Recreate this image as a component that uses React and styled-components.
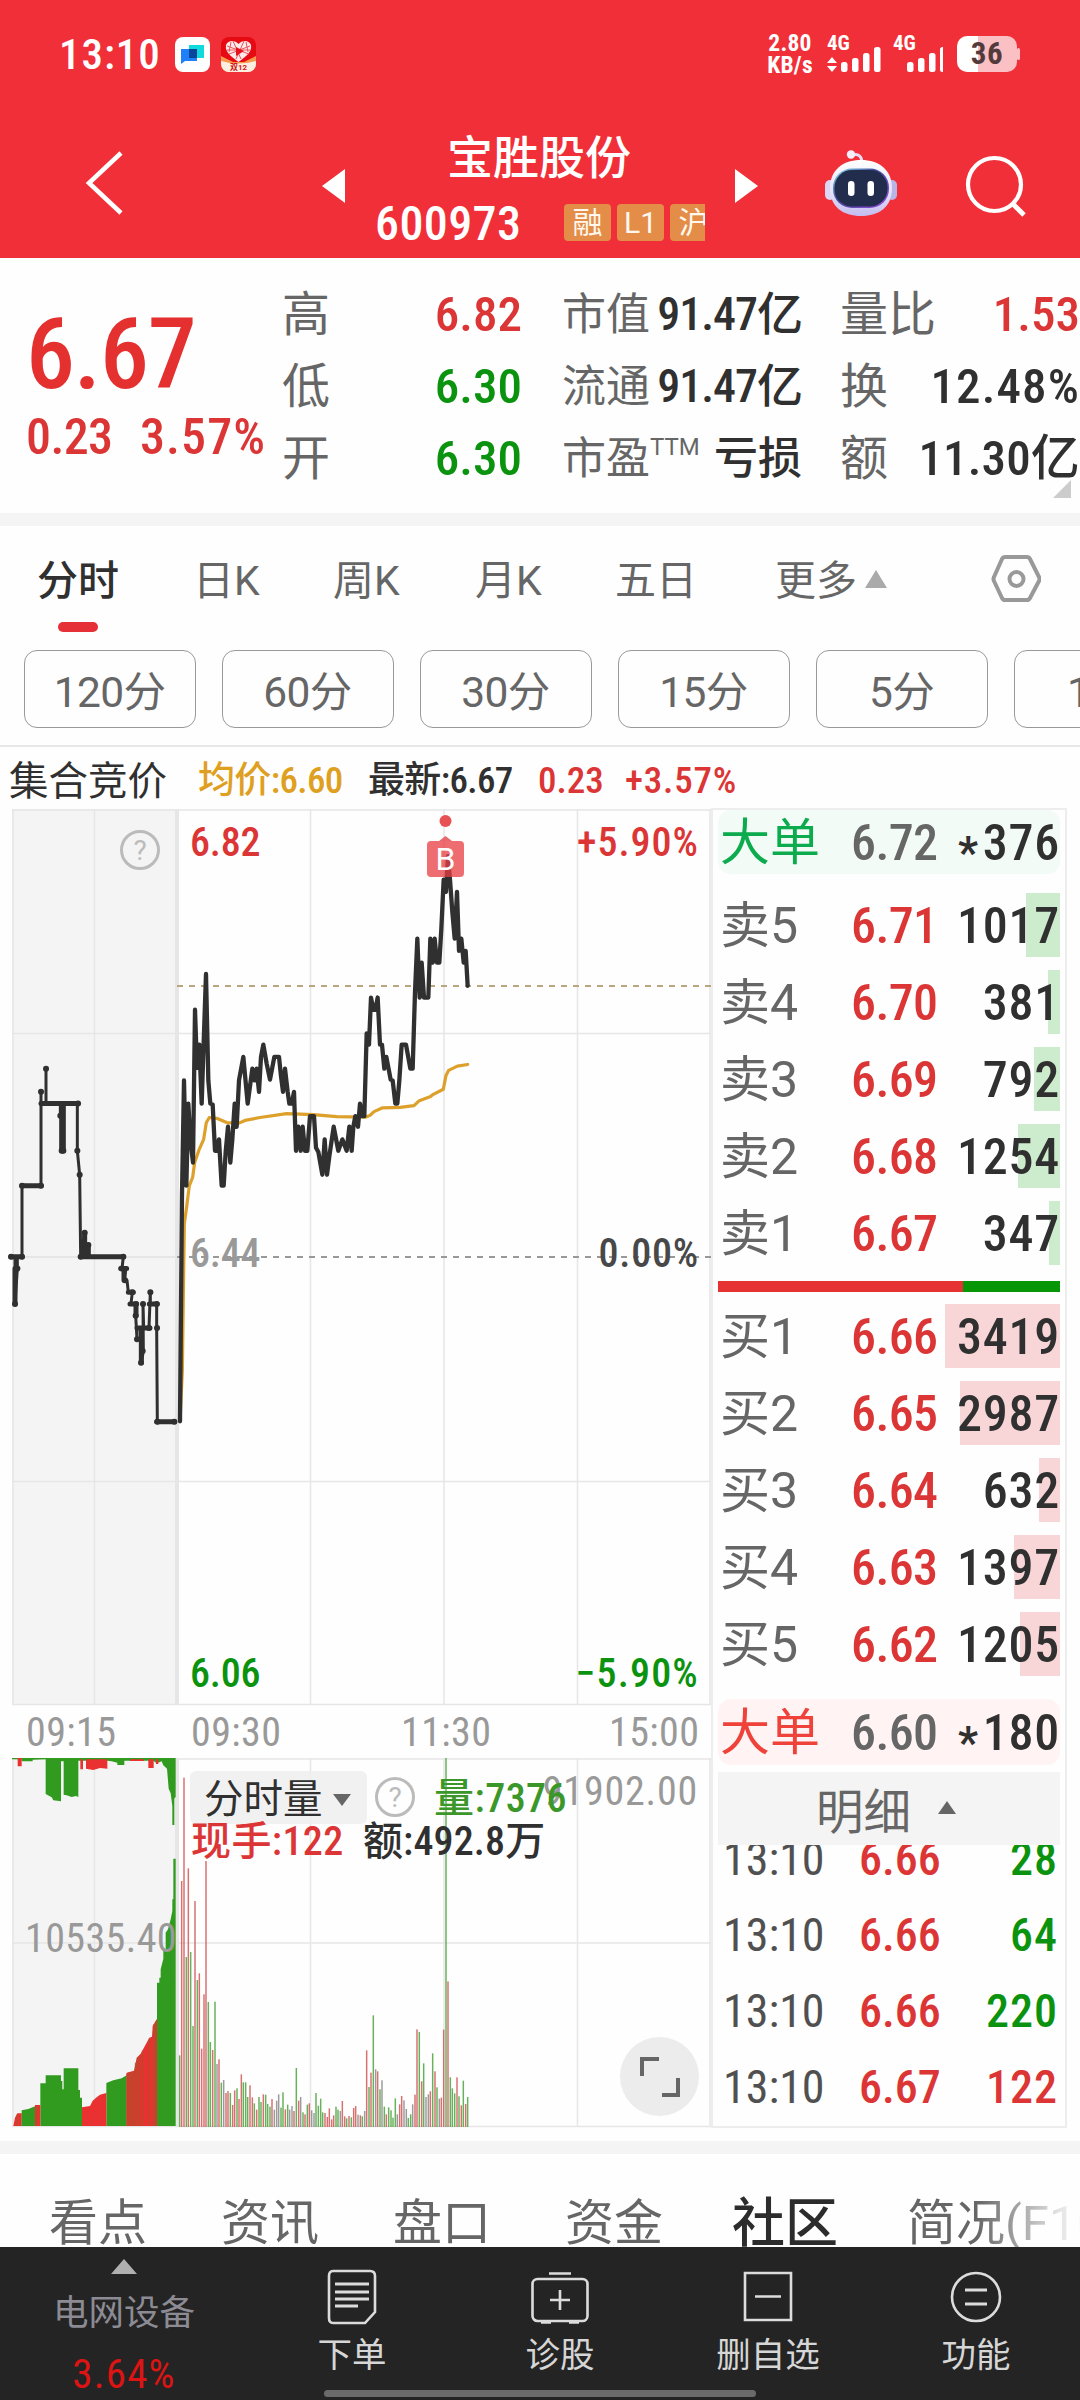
import React from "react";
import styled, { createGlobalStyle } from "styled-components";

const C = {
  brand: "#f12f38",
  up: "#dc3535",
  down: "#0b930f",
  ink: "#303030",
  mute: "#666",
  pale: "#999",
  avg: "#dfa022",
  line: "#e6e6e6",
  band: "#f4f4f4",
};

const Global = createGlobalStyle`
  * { box-sizing: border-box; }
  body { margin: 0; background: #fefefe; }
  #root { width: 1080px; }
`;

const Screen = styled.div`
  width: 1080px;
  height: 2400px;
  overflow: hidden;
  display: flex;
  flex-direction: column;
  background: #fefefe;
  color: ${C.ink};
  font-family: Roboto, "Noto Sans CJK SC", sans-serif;
`;

const Txt = styled.span`
  display: block;
  white-space: nowrap;
  font-size: ${(p) => p.$s}px;
  line-height: 1.2;
  color: ${(p) => p.$c || "inherit"};
  font-weight: ${(p) => p.$w || 400};
  letter-spacing: ${(p) => p.$ls || 0}em;
`;

const Num = styled(Txt)`
  font-family: "Roboto Condensed", Roboto, "Noto Sans CJK SC", sans-serif;
  font-weight: ${(p) => p.$w || 500};
  letter-spacing: ${(p) => (p.$ls === undefined ? 0.022 : p.$ls)}em;
`;

/* ---------- header ---------- */
const Header = styled.header`
  height: 258px;
  flex: none;
  background: ${C.brand};
  color: #fff;
`;
const StatusBar = styled.div`
  height: 108px;
  padding: 0 60px 0 59px;
  display: flex;
  align-items: center;
`;
const Clock = styled(Num)`
  width: 116px;
  padding-top: 2px;
`;
const AppIcons = styled.div`
  display: flex;
  gap: 11px;
  flex: 1;
`;
const Speed = styled.div`
  width: 52px;
  text-align: center;
  margin-right: 11px;
  font-family: "Roboto Condensed", Roboto, sans-serif;
  font-size: 23.5px;
  line-height: 22px;
  font-weight: 700;
  letter-spacing: 0.01em;
`;
const Gap = styled.span`
  width: ${(p) => p.$w}px;
`;
const Battery = styled.div`
  width: 60px;
  height: 36px;
  border-radius: 10px;
  display: flex;
  align-items: center;
  justify-content: center;
  background: linear-gradient(90deg, #fff 35%, #fbc0c4 35%);
`;
const NavRow = styled.div`
  height: 150px;
  display: grid;
  grid-template-columns: 322px 25px 388px 25px 65px 72px 68px 62px;
  align-items: start;
`;
const NavIcon = styled.svg`
  display: block;
  margin-top: ${(p) => p.$t}px;
  margin-left: ${(p) => p.$l || 0}px;
  overflow: visible;
`;
const Title = styled.div`
  display: flex;
  flex-direction: column;
  padding-top: 22px;
`;
const Name = styled(Txt)`
  margin-left: 100px;
  line-height: 57px;
`;
const CodeLine = styled.div`
  display: flex;
  align-items: center;
  height: 71px;
  padding-left: 28px;
`;
const Code = styled(Num)`
  width: 189px;
  padding-top: 3px;
`;
const Tags = styled.div`
  display: flex;
  gap: 6px;
  width: 141px;
  overflow: hidden;
`;
const Tag = styled.span`
  flex: none;
  width: 47px;
  height: 37px;
  border-radius: 4px;
  background: #e38d49;
  color: #fff8ee;
  font-size: 30px;
  line-height: 38px;
  text-align: center;
`;

/* ---------- quote summary ---------- */
const Quote = styled.section`
  height: 255px;
  flex: none;
  display: grid;
  grid-template-columns: 282px 240px 240px 240px;
  position: relative;
`;
const PriceBlock = styled.div`
  padding: 38px 0 0 26px;
  display: flex;
  flex-direction: column;
`;
const Change = styled.div`
  display: grid;
  grid-template-columns: 114px auto;
  margin-top: -7px;
`;
const StatCol = styled.div`
  padding-top: 21px;
  margin-left: ${(p) => p.$m || 0}px;
  width: 240px;
`;
const StatRow = styled.div`
  height: 72px;
  display: flex;
  align-items: center;
  justify-content: space-between;
`;
const LabelWrap = styled.div`
  display: flex;
`;
const Corner = styled.div`
  position: absolute;
  right: 9px;
  bottom: 15px;
  border-left: 18px solid transparent;
  border-bottom: 18px solid #ccc;
`;
const Band = styled.div`
  height: 13px;
  flex: none;
  background: ${C.band};
`;
const Spacer = styled.div`
  height: 13px;
  flex: none;
`;

/* ---------- period tabs ---------- */
const PeriodTabs = styled.div`
  height: 124px;
  flex: none;
  padding: 31px 0 0 37px;
  display: grid;
  grid-template-columns: 156px 140px 142px 140px 160px 216px auto;
`;
const Tab = styled.div`
  display: flex;
  flex-direction: column;
  align-items: flex-start;
`;
const Pill = styled.i`
  width: 40px;
  height: 10px;
  border-radius: 5px;
  background: #e63037;
  margin: 16px 0 0 21px;
`;
const More = styled.div`
  display: flex;
  align-items: flex-start;
  gap: 8px;
`;
const HexIcon = styled.svg`
  margin-top: -4px;
`;
const Caret = styled.i`
  width: 0;
  height: 0;
  border-left: ${(p) => p.$w / 2}px solid transparent;
  border-right: ${(p) => p.$w / 2}px solid transparent;
  ${(p) => (p.$down ? "border-top" : "border-bottom")}: ${(p) => p.$h}px solid ${(p) => p.$c};
  margin-top: ${(p) => p.$t || 0}px;
`;
const Minutes = styled.div`
  height: 97px;
  flex: none;
  padding-left: 24px;
  display: flex;
  gap: 26px;
  overflow: hidden;
  border-bottom: 2px solid #e8e8e8;
`;
const MinuteBtn = styled.div`
  flex: none;
  width: 172px;
  height: 78px;
  border: 1.5px solid #999;
  border-radius: 13px;
  display: flex;
  align-items: center;
  justify-content: center;
  padding: 7px 1px 0 0;
  color: ${C.mute};
`;

/* ---------- chart area ---------- */
const Info = styled.div`
  height: 61px;
  flex: none;
  display: grid;
  grid-template-columns: 189px 170px 170px 87px auto;
  align-items: center;
  padding: 8px 0 0 9px;
`;
const Market = styled.section`
  height: 1320px;
  flex: none;
  display: flex;
  padding-left: 12px;
`;
const Charts = styled.div`
  width: 699px;
  padding-top: 1px;
`;
const Plot = styled.div`
  position: relative;
  height: ${(p) => p.$h}px;
`;
const Canvas = styled.svg`
  position: absolute;
  left: 0;
  top: 0;
  display: block;
  overflow: visible;
`;
const Mark = styled(Num)`
  position: absolute;
  line-height: 40px;
  margin-top: -20px;
  top: ${(p) => p.$y}px;
  ${(p) => (p.$r !== undefined ? `right: ${p.$r}px` : `left: ${p.$x}px`)};
`;
const Flag = styled.div`
  position: absolute;
  left: 415px;
  top: 32px;
  width: 37px;
  height: 36px;
  border-radius: 4px;
  background: rgba(232, 60, 64, 0.75);
  color: #fff;
  font: 400 32px/37px Roboto, sans-serif;
  text-align: center;
`;
const Times = styled.div`
  height: 53px;
  display: grid;
  grid-template-columns: 165px 210px 208px 100px;
  align-items: center;
  padding: 2px 0 0 14px;
  color: ${C.pale};
`;
const Picker = styled.div`
  position: absolute;
  left: 178px;
  top: 13px;
  width: 177px;
  height: 53px;
  border-radius: 6px;
  background: rgba(238, 238, 238, 0.85);
  display: flex;
  align-items: center;
  padding: 4px 0 0 14px;
  gap: 10px;
`;
const Help = styled.div`
  position: absolute;
  left: ${(p) => p.$x}px;
  top: ${(p) => p.$y}px;
  width: 40px;
  height: 40px;
  border: 3px solid #bbb;
  border-radius: 50%;
  color: #bbb;
  font: 400 28px/35px Roboto, sans-serif;
  text-align: center;
`;
const Expand = styled.div`
  position: absolute;
  left: 608px;
  top: 279px;
  width: 79px;
  height: 79px;
  border-radius: 50%;
  background: #ececec;
  display: grid;
  place-items: center;
`;

/* ---------- order book ---------- */
const Book = styled.aside`
  width: 356px;
  height: 1320px;
  border: 2px solid #ededed;
  padding: 0 5px;
  display: flex;
  flex-direction: column;
  overflow: hidden;
`;
const BigOrder = styled.div`
  height: ${(p) => p.$h}px;
  margin-top: ${(p) => p.$t || 0}px;
  flex: none;
  border-radius: 13px;
  background: ${(p) => p.$bg};
  display: grid;
  grid-template-columns: 131px 89px 1fr;
  align-items: center;
  padding: 1px 0 0 2px;
`;
const Level = styled.div`
  height: 64px;
  margin-bottom: 13px;
  flex: none;
  display: grid;
  grid-template-columns: 131px 89px 1fr;
  align-items: center;
  padding: 2px 0 0 2px;
  background: linear-gradient(${(p) => p.$bg}, ${(p) => p.$bg}) right / ${(p) => p.$bar}px 100% no-repeat;
`;
const Right = styled(Num)`
  text-align: right;
`;
const Star = styled.span`
  display: inline-block;
  font-family: Roboto, sans-serif;
  font-size: 44px;
  font-weight: 700;
  line-height: 1;
  transform: translateY(8px);
  margin-right: 4px;
`;
const Levels = styled.div`
  padding-top: ${(p) => p.$t}px;
`;
const Balance = styled.div`
  height: 11px;
  flex: none;
  margin-top: 3px;
  background: linear-gradient(90deg, #e53333 0 245.5px, #069606 245.5px);
`;
const DetailBar = styled.div`
  height: 73px;
  flex: none;
  margin-top: 7px;
  background: ${C.band};
  display: flex;
  padding: 13px 0 0 98px;
  gap: 27px;
  color: ${C.mute};
`;
const Trades = styled.div`
  overflow: hidden;
  flex: 1;
`;
const TradeList = styled.div`
  margin-top: -23px;
`;
const Trade = styled.div`
  height: 76px;
  display: grid;
  grid-template-columns: 136px 80px 1fr;
  align-items: center;
  padding: 0 2px 0 5px;
`;

/* ---------- bottom ---------- */
const Sections = styled.nav`
  height: 93px;
  flex: none;
  display: flex;
  padding: 48px 0 0 49px;
  gap: 74px;
  align-items: center;
  overflow: hidden;
  color: ${C.mute};
`;
const Current = styled(Txt)`
  margin: 0 -5px 0 -5px;
`;
const Faded = styled(Txt)`
  background: linear-gradient(90deg, #666 70px, #e0e0e0 150px, #fefefe 178px);
  -webkit-background-clip: text;
  background-clip: text;
  color: transparent;
`;
const Dock = styled.footer`
  height: 153px;
  flex: none;
  background: #242424;
  color: #d6d6d6;
`;
const DockRow = styled.div`
  height: 143px;
  display: grid;
  grid-template-columns: 248px repeat(4, 208px);
`;
const DockItem = styled.div`
  display: flex;
  flex-direction: column;
  align-items: center;
  padding-top: ${(p) => p.$t || 21}px;
`;
const DockLabel = styled(Txt)`
  margin-top: ${(p) => p.$m}px;
`;
const DockRate = styled(Num)`
  margin-top: 15px;
`;
const HomeBar = styled.div`
  width: 432px;
  height: 7px;
  border-radius: 4px;
  background: #6a6a6a;
  margin: 0 auto;
`;

/* ---------- data ---------- */
const AUCTION =
  "M33 1109H52V1137L45 1221V1109H66V940H123V717V745H138V662V745H181V774V745H187V857V745H232V857L239 914L242 1109L254 1052V1109L265 1081V1109H370L366 1137H378L372 1165H381L385 1193H397L393 1221H408L407 1249L411 1305V1278H424V1361L430 1333L429 1221L431 1278H447L451 1193V1221H470V1278L472 1501H525";
const AUCTION_BOLD =
  "M33 1109H66M66 940H123M123 745H234M242 1109H265M254 1052V1109M265 1081V1109M265 1109H370M362 1137H380M385 1193H400M390 1221H410M411 1278H450M448 1221H472M470 1501H524M45 1221V1137M185 745V857M190 745V857M424 1361V1278M372 1137V1165M408 1221V1249";
const AUCTION_DOTS = [
  [33, 1109], [52, 1137], [45, 1221], [66, 1109], [66, 940], [123, 940], [123, 717], [138, 662], [181, 774], [185, 857], [190, 857],
  [234, 745], [232, 857], [239, 914], [242, 1109], [254, 1052], [265, 1081], [370, 1109], [366, 1137], [375, 1165], [397, 1193], [408, 1221],
  [407, 1249], [411, 1305], [423, 1361], [428, 1333], [429, 1221], [447, 1278], [451, 1193], [470, 1221], [471, 1278], [472, 1501], [523, 1501],
];
const PRICE =
  "540,1500 546,960 552,690 559,940 565,745 571,830 579,885 585,522 591,660 598,605 605,745 611,600 618,437 625,690 631,745 638,747 645,857 651,857 657,830 665,940 671,940 677,860 684,800 691,885 697,830 704,745 710,800 717,690 730,634 743,745 757,662 763,690 770,662 777,717 783,634 790,605 800,650 810,688 823,634 837,634 843,680 849,717 855,662 863,717 868,745 875,745 882,717 888,857 895,800 902,857 908,800 915,857 922,857 930,775 942,775 948,850 955,860 967,914 974,830 981,914 988,870 1001,800 1015,857 1027,830 1040,857 1048,800 1055,857 1060,800 1066,775 1074,800 1080,745 1088,775 1093,775 1100,578 1107,605 1113,493 1120,522 1126,522 1133,493 1140,605 1146,605 1153,662 1159,634 1172,688 1178,690 1186,745 1192,745 1198,690 1205,605 1218,605 1231,662 1238,662 1245,480 1252,353 1259,493 1265,410 1272,493 1285,493 1291,353 1298,410 1304,353 1311,410 1318,410 1324,330 1331,213 1338,242 1344,157 1350,213 1357,290 1364,353 1371,242 1377,382 1384,353 1391,410 1397,382 1403,465";
const AVERAGE =
  "540,1500 547,1380 550,1200 553,1030 560,990 568,940 578,920 584,885 598,853 611,830 619,790 628,778 650,780 680,790 715,792 735,785 780,778 860,769 940,771 1010,776 1098,777 1110,773 1122,764 1148,755 1200,754 1242,750 1258,738 1290,729 1300,723 1330,711 1338,678 1346,666 1372,656 1403,652";

const VOLUME =
  "g539,1248 r545,725 r552,415 g559,953 r565,687 g572,938 g579,1160 r585,785 g592,1022 r598,1002 r605,1228 r612,1065 r618,665 g625,1088 g631,1208 r638,1232 g645,1087 k651,1274 r657,1260 g664,1330 k671,1322 r678,1361 r684,1355 g691,1361 r698,1397 r704,1353 g711,1347 r717,1379 r724,1305 g730,1329 g737,1329 g743,1373 r750,1338 r757,1374 g763,1392 r770,1411 g777,1373 g783,1388 r790,1365 g797,1366 g803,1394 g810,1402 r816,1379 k823,1411 k830,1384 k836,1365 g843,1405 g849,1359 r856,1410 g863,1396 k869,1411 k876,1400 r882,1415 g889,1286 r896,1384 k902,1373 g909,1419 r915,1425 g922,1396 r928,1392 k935,1413 k942,1421 g948,1361 g955,1399 g962,1378 g968,1419 r975,1421 r982,1433 r988,1407 r995,1440 r1001,1428 g1008,1402 g1014,1411 k1021,1415 r1027,1385 r1034,1431 g1040,1437 r1047,1430 g1054,1434 r1061,1406 r1067,1400 k1074,1426 r1081,1428 g1087,1431 k1094,1415 r1100,1233 g1107,1343 r1113,1300 g1120,1128 k1127,1290 r1133,1296 g1140,1350 k1146,1323 g1153,1402 r1159,1425 g1166,1404 g1173,1413 g1179,1435 g1186,1377 k1192,1425 r1199,1395 r1205,1370 k1212,1383 k1219,1409 g1225,1436 g1232,1425 k1238,1395 r1245,1366 r1251,1170 g1258,1178 r1265,1326 g1271,1272 k1278,1373 k1285,1365 r1291,1356 g1298,1242 r1305,1296 g1311,1344 k1318,1378 r1324,1375 r1331,1171 g1338,355 r1344,1026 g1351,1314 g1357,1347 g1364,1362 r1371,1314 g1377,1371 r1384,1398 g1390,1324 r1397,1394 g1403,1373"
    .split(" ")
    .map((t) => {
      const [x, y] = t.slice(1).split(",").map(Number);
      return { c: t[0], x, y };
    });
const TONE = { r: "#cf5050", g: "#44a035", k: "#858585" };

const SELLS = [
  ["卖5", "6.71", "1017", 34],
  ["卖4", "6.70", "381", 12],
  ["卖3", "6.69", "792", 26],
  ["卖2", "6.68", "1254", 42],
  ["卖1", "6.67", "347", 11],
];
const BUYS = [
  ["买1", "6.66", "3419", 115],
  ["买2", "6.65", "2987", 100],
  ["买3", "6.64", "632", 21],
  ["买4", "6.63", "1397", 46],
  ["买5", "6.62", "1205", 40],
];
const TRADES = [
  ["6.66", "28", C.down],
  ["6.66", "64", C.down],
  ["6.66", "220", C.down],
  ["6.67", "122", C.up],
];

/* ---------- pieces ---------- */
const Signal = ({ arrows }) => (
  <svg width={arrows ? 56 : 50} height="40" viewBox={arrows ? "0 0 56 40" : "0 0 50 40"} fill="#fff">
    <text x="0" y="16" fontFamily="Roboto Condensed, Roboto" fontWeight="700" fontSize="21">4G</text>
    {arrows && <path d="M0 29l5-6 5 6zM0 32l5 6 5-6z" />}
    {[28, 24, 19, 13].map((y, i) => (
      <rect key={y} x={14 + i * 11} y={y} width="6.500" height={38 - y} rx="2.500" />
    ))}
  </svg>
);

const Robot = () => (
  <NavIcon width="72" height="67" viewBox="0 0 72 67" $t="42">
    <defs>
      <linearGradient id="shell" x1="0" y1="0" x2="0" y2="1">
        <stop offset="0" stopColor="#fff" />
        <stop offset=".6" stopColor="#e4e0f8" />
        <stop offset="1" stopColor="#c3bcf0" />
      </linearGradient>
      <linearGradient id="rim" x1="0" y1="0" x2="1" y2="1">
        <stop offset="0" stopColor="#8fe6f0" />
        <stop offset=".4" stopColor="#3e4a9a" />
        <stop offset="1" stopColor="#9c4be0" />
      </linearGradient>
    </defs>
    <path d="M27 5c7-2 10 2 10 8" fill="none" stroke="#e6dcf4" strokeWidth="3" />
    <circle cx="26" cy="4.500" r="4.200" fill="#f6eefa" />
    <rect x="0" y="30" width="10" height="20" rx="5" fill="#dcd8f4" />
    <rect x="62" y="30" width="10" height="20" rx="5" fill="#b9b4e6" />
    <path d="M36 10C54 10 67 20 67 38C67 57 54 66 36 66S5 57 5 38C5 20 18 10 36 10z" fill="url(#shell)" />
    <rect x="8" y="18.500" width="56" height="39.500" rx="19" fill="url(#rim)" />
    <rect x="9.500" y="20" width="53" height="36.500" rx="17.500" fill="#222c4c" />
    <rect x="23" y="31" width="6.500" height="15" rx="3.200" fill="#fff" />
    <rect x="42.500" y="31" width="6.500" height="15" rx="3.200" fill="#fff" />
  </NavIcon>
);

const Grid = ({ rows, w = 699, h }) => (
  <g stroke={C.line} strokeWidth="1.500" fill="none">
    {rows.map((y) => (
      <path key={y} d={`M0 ${y}H${w}`} />
    ))}
    {[1, 82.5, 298.5, 432, 565.5, 698].map((x) => (
      <path key={x} d={`M${x} 0V${h}`} />
    ))}
    <path d={`M165 0V${h}`} strokeWidth="4" />
  </g>
);

const PriceChart = () => (
  <Plot $h="896">
    <Canvas width="699" height="896">
      <rect width="165" height="896" fill={C.band} />
      <Grid rows={[1, 224.5, 672.5, 895.5]} h={896} />
      <path d="M0 448H165" stroke={C.line} strokeWidth="2" />
      <path d="M165 177H699" stroke="#b9a67f" strokeWidth="2" strokeDasharray="6 6" />
      <path d="M165 448H699" stroke="#999" strokeWidth="2" strokeDasharray="6 6" />
      <svg width="699" height="896" viewBox="36 45 2097 2129" preserveAspectRatio="none" overflow="visible">
        <g fill="none" stroke="#303030" strokeLinejoin="round" strokeLinecap="round">
          <path d={AUCTION} strokeWidth="3" vectorEffect="non-scaling-stroke" />
          <path d={AUCTION_BOLD} strokeWidth="5" vectorEffect="non-scaling-stroke" />
          {AUCTION_DOTS.map(([x, y], i) => (
            <path key={i} d={`M${x} ${y}h.1`} strokeWidth="6" vectorEffect="non-scaling-stroke" />
          ))}
          <polyline points={AVERAGE} stroke="#dca02b" strokeWidth="3.200" vectorEffect="non-scaling-stroke" />
          <polyline points={PRICE} strokeWidth="4.300" vectorEffect="non-scaling-stroke" />
        </g>
      </svg>
      <circle cx="433.500" cy="12" r="6" fill="#e85154" />
      <path d="M427 32l6.500-5 6.500 5z" fill="#e9686b" />
    </Canvas>
    <Help $x={108} $y={21}>?</Help>
    <Flag>B</Flag>
    <Mark $s={40} $c={C.up} $x={178} $y={34} $ls={-0.005}>6.82</Mark>
    <Mark $s={40} $c={C.up} $r={12} $y={34} $ls={0.025}>+5.90%</Mark>
    <Mark $s={40} $c={C.pale} $x={178} $y={445} $ls={-0.005}>6.44</Mark>
    <Mark $s={40} $c="#484848" $r={12} $y={445} $ls={0.02}>0.00%</Mark>
    <Mark $s={40} $c={C.down} $x={178} $y={865} $ls={-0.005}>6.06</Mark>
    <Mark $s={40} $c={C.down} $r={12} $y={865} $ls={0.03}>−5.90%</Mark>
  </Plot>
);

const VolumeChart = () => (
  <Plot $h="370">
    <Canvas width="699" height="370">
      <rect width="165" height="369" fill={C.band} />
      <Grid rows={[1, 185, 368.5]} h={369} />
      <svg width="699" height="369" viewBox="36 356 2097 1107" preserveAspectRatio="none">
        <g fill="#319b1f">
          <path d="M65 1460V1413L85 1409L105 1401V1460zM121 1460V1332H137V1308H183V1325H187V1350H191V1287H235V1352H240V1375H246V1460zM319 1460V1331L340 1323L365 1317L380 1308V1460z" />
          <path d="M471 1460V1030H478V1015H482V990L490 958V930H497V880L504 870L512 840L517 815V780H520V658H527V1460z" />
          <path d="M36 356H137V360L98 361V366H65V360H36zM137 356H235V473L228 470L215 473L200 468L191 466V366H183V486L160 483L155 474L137 464zM235 356H527V472L523 478V557H517V500L512 462L506 448L501 388L490 378L485 366L470 372L460 364H373V377H352V370L335 366L322 364H235z" />
        </g>
        <g fill="#e93131">
          <path d="M40 1460L45 1435L52 1422H65V1460zM105 1460V1397H121V1460zM246 1460V1404L270 1400L278 1384L290 1374L300 1366L319 1361V1460z" />
          <path d="M380 1460V1300L402 1294L410 1255L422 1243L430 1228L448 1195L456 1192L458 1160L465 1148L471 1138V1460z" />
          <path d="M53 356H65V381H53zM241 360H249V390H241zM258 360H322V388L300 386L280 392L258 388zM390 360H432V365H390zM445 360H461V386H445zM468 360H475V374H468z" />
        </g>
        <g stroke="#9a5a28" strokeWidth="2.500">
          <path d="M52 1425V1460M62 1425V1460M110 1400V1460M380 1303V1460M386 1300V1460M392 1299V1460M398 1297V1460M406 1270V1460M413 1254V1460M419 1247V1460M427 1234V1460M448 1197V1460M462 1155V1460M467 1147V1460" />
        </g>
        {VOLUME.map((v) => (
          <rect key={v.x} x={v.x - 2.2} y={v.y} width="4.400" height={1463 - v.y} fill={TONE[v.c]} opacity=".82" />
        ))}
      </svg>
    </Canvas>
    <Mark $s={40} $w={400} $c={C.pale} $x={13} $y={181} $ls={0.01}>10535.40</Mark>
    <Picker>
      <Txt $s={39.500}>分时量</Txt>
      <Caret $w={18} $h={12} $c="#666" $down />
    </Picker>
    <Help $x={363} $y={19}>?</Help>
    <Mark $s={40} $w={400} $c={C.pale} $r={13} $y={34} $ls={0.02}>91902.00</Mark>
    <Mark $s={40} $c="#3b972a" $x={422} $y={41} $ls={0.012}>量:7376</Mark>
    <Mark $s={40} $c={C.up} $x={179} $y={84} $ls={0.01}>现手:122</Mark>
    <Mark $s={40} $x={351} $y={84} $ls={0.003}>额:492.8万</Mark>
    <Expand>
      <svg width="42" height="42" viewBox="0 0 42 42" fill="none" stroke="#666" strokeWidth="4">
        <path d="M20 3H3V20M23 39H39V22" />
      </svg>
    </Expand>
  </Plot>
);

const LevelRow = ({ row, bg }) => (
  <Level $bg={bg} $bar={row[3]}>
    <Txt $s={50} $c={C.mute}>{row[0]}</Txt>
    <Num $s={50} $c={C.up} $ls={-0.012}>{row[1]}</Num>
    <Right $s={50} $ls={0.015}>{row[2]}</Right>
  </Level>
);

const BigOrderRow = ({ price, qty, c, bg, h, t }) => (
  <BigOrder $h={h} $t={t} $bg={bg}>
    <Txt $s={50} $c={c}>大单</Txt>
    <Num $s={50} $c={C.mute} $ls={-0.012}>{price}</Num>
    <Right $s={50} $ls={0.015}>
      <Star>*</Star>
      {qty}
    </Right>
  </BigOrder>
);

const Stat = ({ label, value, c, ls = 0, s = 48, children, vs = 49 }) => (
  <StatRow>
    <LabelWrap>
      <Txt $s={s} $c={C.mute}>{label}</Txt>
      {children}
    </LabelWrap>
    <Num $s={vs} $c={c} $ls={ls}>{value}</Num>
  </StatRow>
);

export default function App() {
  return (
    <Screen>
      <Global />
      <Header>
        <StatusBar>
          <Clock $s={43}>13:10</Clock>
          <AppIcons>
            <svg width="35" height="35" viewBox="0 0 35 35">
              <rect width="35" height="35" rx="8" fill="#fff" />
              <path d="M14 8h15v13H14z" fill="#10dadb" />
              <path d="M6 12h16v12H10l-4 3z" fill="#1f80fa" />
              <path d="M14 12h8v9h-8z" fill="#08459b" />
            </svg>
            <svg width="35" height="35" viewBox="0 0 35 35">
              <rect width="35" height="35" rx="8" fill="#e60a12" />
              <path d="M0 19l12 6h11l12-6v8a8 8 0 0 1-8 8H8a8 8 0 0 1-8-8z" fill="#f79a50" />
              <path d="M0 24q17 5 35 0v3a8 8 0 0 1-8 8H8a8 8 0 0 1-8-8z" fill="#fdeee2" />
              <path d="M17.500 25C8 18 4 14 5 8c2-5 9-5 12.500-1C21 3 28 3 30 8c1 6-3 10-12.500 17z" fill="#ffe9ea" />
              <path d="M6 9l22 8M29 9L8 17M12 4l8 18M23 4l-8 18M6 13h23M10 5l-2 10M25 5l2 10" stroke="#e8545a" strokeWidth="1" />
              <path d="M15 10l8 4-8 5z" fill="#e8101a" />
              <text x="17.500" y="33" textAnchor="middle" fontSize="8" fontWeight="700" fill="#d01818" fontFamily="Roboto, Noto Sans CJK SC">双12</text>
            </svg>
          </AppIcons>
          <Speed>
            2.80
            <br />
            KB/s
          </Speed>
          <Signal arrows />
          <Gap $w={10} />
          <Signal />
          <Gap $w={14} />
          <Battery>
            <Num $s={31} $w={700} $c="#533b3c">36</Num>
          </Battery>
          <svg width="3" height="12">
            <rect width="3" height="12" rx="1.500" fill="#fbc0c4" />
          </svg>
        </StatusBar>
        <NavRow>
          <NavIcon width="40" height="66" viewBox="0 0 40 66" $t="42" $l="85" fill="none" stroke="#fff" strokeWidth="4.500">
            <path d="M36 3L4 33L36 63" />
          </NavIcon>
          <NavIcon width="24" height="34" viewBox="0 0 24 34" $t="61">
            <path d="M23 0V34L0 17z" fill="#fff" />
          </NavIcon>
          <Title>
            <Name $s={46} $w={500}>宝胜股份</Name>
            <CodeLine>
              <Code $s={48} $ls={0.008}>600973</Code>
              <Tags>
                <Tag>融</Tag>
                <Tag>L1</Tag>
                <Tag>沪</Tag>
              </Tags>
            </CodeLine>
          </Title>
          <NavIcon width="24" height="34" viewBox="0 0 24 34" $t="61">
            <path d="M0 0V34L23 17z" fill="#fff" />
          </NavIcon>
          <span />
          <Robot />
          <span />
          <NavIcon width="62" height="62" viewBox="0 0 62 62" $t="47" fill="none" stroke="#fff" strokeWidth="4.200">
            <circle cx="29.500" cy="29.500" r="26.500" />
            <path d="M47 48L59 60" strokeWidth="5" />
          </NavIcon>
        </NavRow>
      </Header>

      <Quote>
        <PriceBlock>
          <Num $s={98} $c="#e53030" $ls={-0.012}>6.67</Num>
          <Change>
            <Num $s={50} $c={C.up} $ls={-0.012}>0.23</Num>
            <Num $s={50} $c={C.up}>3.57%</Num>
          </Change>
        </PriceBlock>
        <StatCol>
          <Stat label="高" value="6.82" c={C.up} />
          <Stat label="低" value="6.30" c={C.down} />
          <Stat label="开" value="6.30" c={C.down} />
        </StatCol>
        <StatCol $m={40}>
          <Stat label="市值" value="91.47亿" s={44} vs={46} ls={-0.022} />
          <Stat label="流通" value="91.47亿" s={44} vs={46} ls={-0.022} />
          <Stat label="市盈" value="亏损" s={44} vs={44} ls={0}>
            <Txt $s={24} $c={C.mute}>TTM</Txt>
          </Stat>
        </StatCol>
        <StatCol $m={78}>
          <Stat label="量比" value="1.53" c={C.up} />
          <Stat label="换" value="12.48%" ls={0.023} />
          <Stat label="额" value="11.30亿" ls={0.003} />
        </StatCol>
        <Corner />
      </Quote>
      <Band />

      <PeriodTabs>
        <Tab>
          <Txt $s={41} $w={500}>分时</Txt>
          <Pill />
        </Tab>
        {["日K", "周K", "月K", "五日"].map((t) => (
          <Txt key={t} $s={41} $c={C.mute}>{t}</Txt>
        ))}
        <More>
          <Txt $s={41} $c={C.mute}>更多</Txt>
          <Caret $w={22} $h={18} $c="#aaa" $t={13} />
        </More>
        <HexIcon width="50" height="50" viewBox="0 0 50 50" fill="none" stroke="#999" strokeWidth="4">
          <path d="M14 4H36Q38 4 39 6L48 24Q49 26 48 28L39 45Q38 47 36 47H14Q12 47 11 45L3 28Q2 26 3 24L11 6Q12 4 14 4z" />
          <circle cx="25.500" cy="26" r="7" />
        </HexIcon>
      </PeriodTabs>
      <Minutes>
        {["120分", "60分", "30分", "15分", "5分", "1分"].map((t) => (
          <MinuteBtn key={t}>
            <Txt $s={42.500} $ls={-0.015}>{t}</Txt>
          </MinuteBtn>
        ))}
      </Minutes>

      <Info>
        <Txt $s={39.500}>集合竞价</Txt>
        <Num $s={37} $c={C.avg} $ls={-0.018}>均价:6.60</Num>
        <Num $s={37} $ls={-0.018}>最新:6.67</Num>
        <Num $s={37} $c={C.up} $ls={0}>0.23</Num>
        <Num $s={37} $c={C.up}>+3.57%</Num>
      </Info>

      <Market>
        <Charts>
          <PriceChart />
          <Times>
            {["09:15", "09:30", "11:30", "15:00"].map((t) => (
              <Num key={t} $s={40} $w={400} $ls={0.01}>{t}</Num>
            ))}
          </Times>
          <VolumeChart />
        </Charts>
        <Book>
          <BigOrderRow h={64} bg="#f2fbf6" c="#0cab4d" price="6.72" qty="376" />
          <Levels $t={19}>
            {SELLS.map((r) => (
              <LevelRow key={r[0]} row={r} bg="#cdebcd" />
            ))}
          </Levels>
          <Balance />
          <Levels $t={12}>
            {BUYS.map((r) => (
              <LevelRow key={r[0]} row={r} bg="#f8d6d7" />
            ))}
          </Levels>
          <BigOrderRow h={66} t={10} bg="#fff4f3" c="#ee423a" price="6.60" qty="180" />
          <DetailBar>
            <Txt $s={47.500}>明细</Txt>
            <Caret $w={19} $h={13} $c="#666" $t={16} />
          </DetailBar>
          <Trades>
            <TradeList>
              {TRADES.map(([p, v, c], i) => (
                <Trade key={i}>
                  <Num $s={46} $w={400} $c="#505050" $ls={0}>13:10</Num>
                  <Num $s={46} $c={C.up} $ls={0}>{p}</Num>
                  <Right $s={46} $c={c}>{v}</Right>
                </Trade>
              ))}
            </TradeList>
          </Trades>
        </Book>
      </Market>
      <Spacer />
      <Band />

      <Sections>
        {["看点", "资讯", "盘口", "资金"].map((t) => (
          <Txt key={t} $s={49}>{t}</Txt>
        ))}
        <Current $s={53} $c="#2c2c2c" $w={500}>社区</Current>
        <Faded $s={49}>简况(F10)</Faded>
      </Sections>

      <Dock>
        <DockRow>
          <DockItem $t={12}>
            <Caret $w={26} $h={15} $c="#b0b0b0" />
            <DockLabel $s={35.500} $c="#8c8b94" $m={18}>电网设备</DockLabel>
            <DockRate $s={41} $w={400} $c="#dc1414" $ls={0.03}>3.64%</DockRate>
          </DockItem>
          <DockItem>
            <svg width="52" height="58" viewBox="0 0 52 58" fill="none" stroke="#dcdcdc" strokeWidth="2.600">
              <path d="M7 3H44Q49 3 49 8V44L39 55H7Q3 55 3 50V8Q3 3 7 3z" />
              <path d="M9 16H43M9 24H43M9 31H43M9 38H32" strokeWidth="3" />
            </svg>
            <DockLabel $s={34.500} $m={9}>下单</DockLabel>
          </DockItem>
          <DockItem>
            <svg width="60" height="58" viewBox="0 0 60 58" fill="none" stroke="#dcdcdc" strokeWidth="2.600">
              <rect x="2.500" y="11" width="55" height="42" rx="5" />
              <path d="M19 5.500H41M11 54.500H21M39 54.500H49M20 32H40M30 22V42" />
            </svg>
            <DockLabel $s={34.500} $m={9}>诊股</DockLabel>
          </DockItem>
          <DockItem>
            <svg width="52" height="58" viewBox="0 0 52 58" fill="none" stroke="#dcdcdc" strokeWidth="2.600">
              <path d="M3 5H49V52H3zM13 28.500H39" />
            </svg>
            <DockLabel $s={34.500} $m={9}>删自选</DockLabel>
          </DockItem>
          <DockItem>
            <svg width="52" height="58" viewBox="0 0 52 58" fill="none" stroke="#dcdcdc" strokeWidth="2.600">
              <circle cx="26" cy="29" r="24" />
              <path d="M15 22H37M15 36H37" strokeWidth="3" />
            </svg>
            <DockLabel $s={34.500} $m={9}>功能</DockLabel>
          </DockItem>
        </DockRow>
        <HomeBar />
      </Dock>
    </Screen>
  );
}
